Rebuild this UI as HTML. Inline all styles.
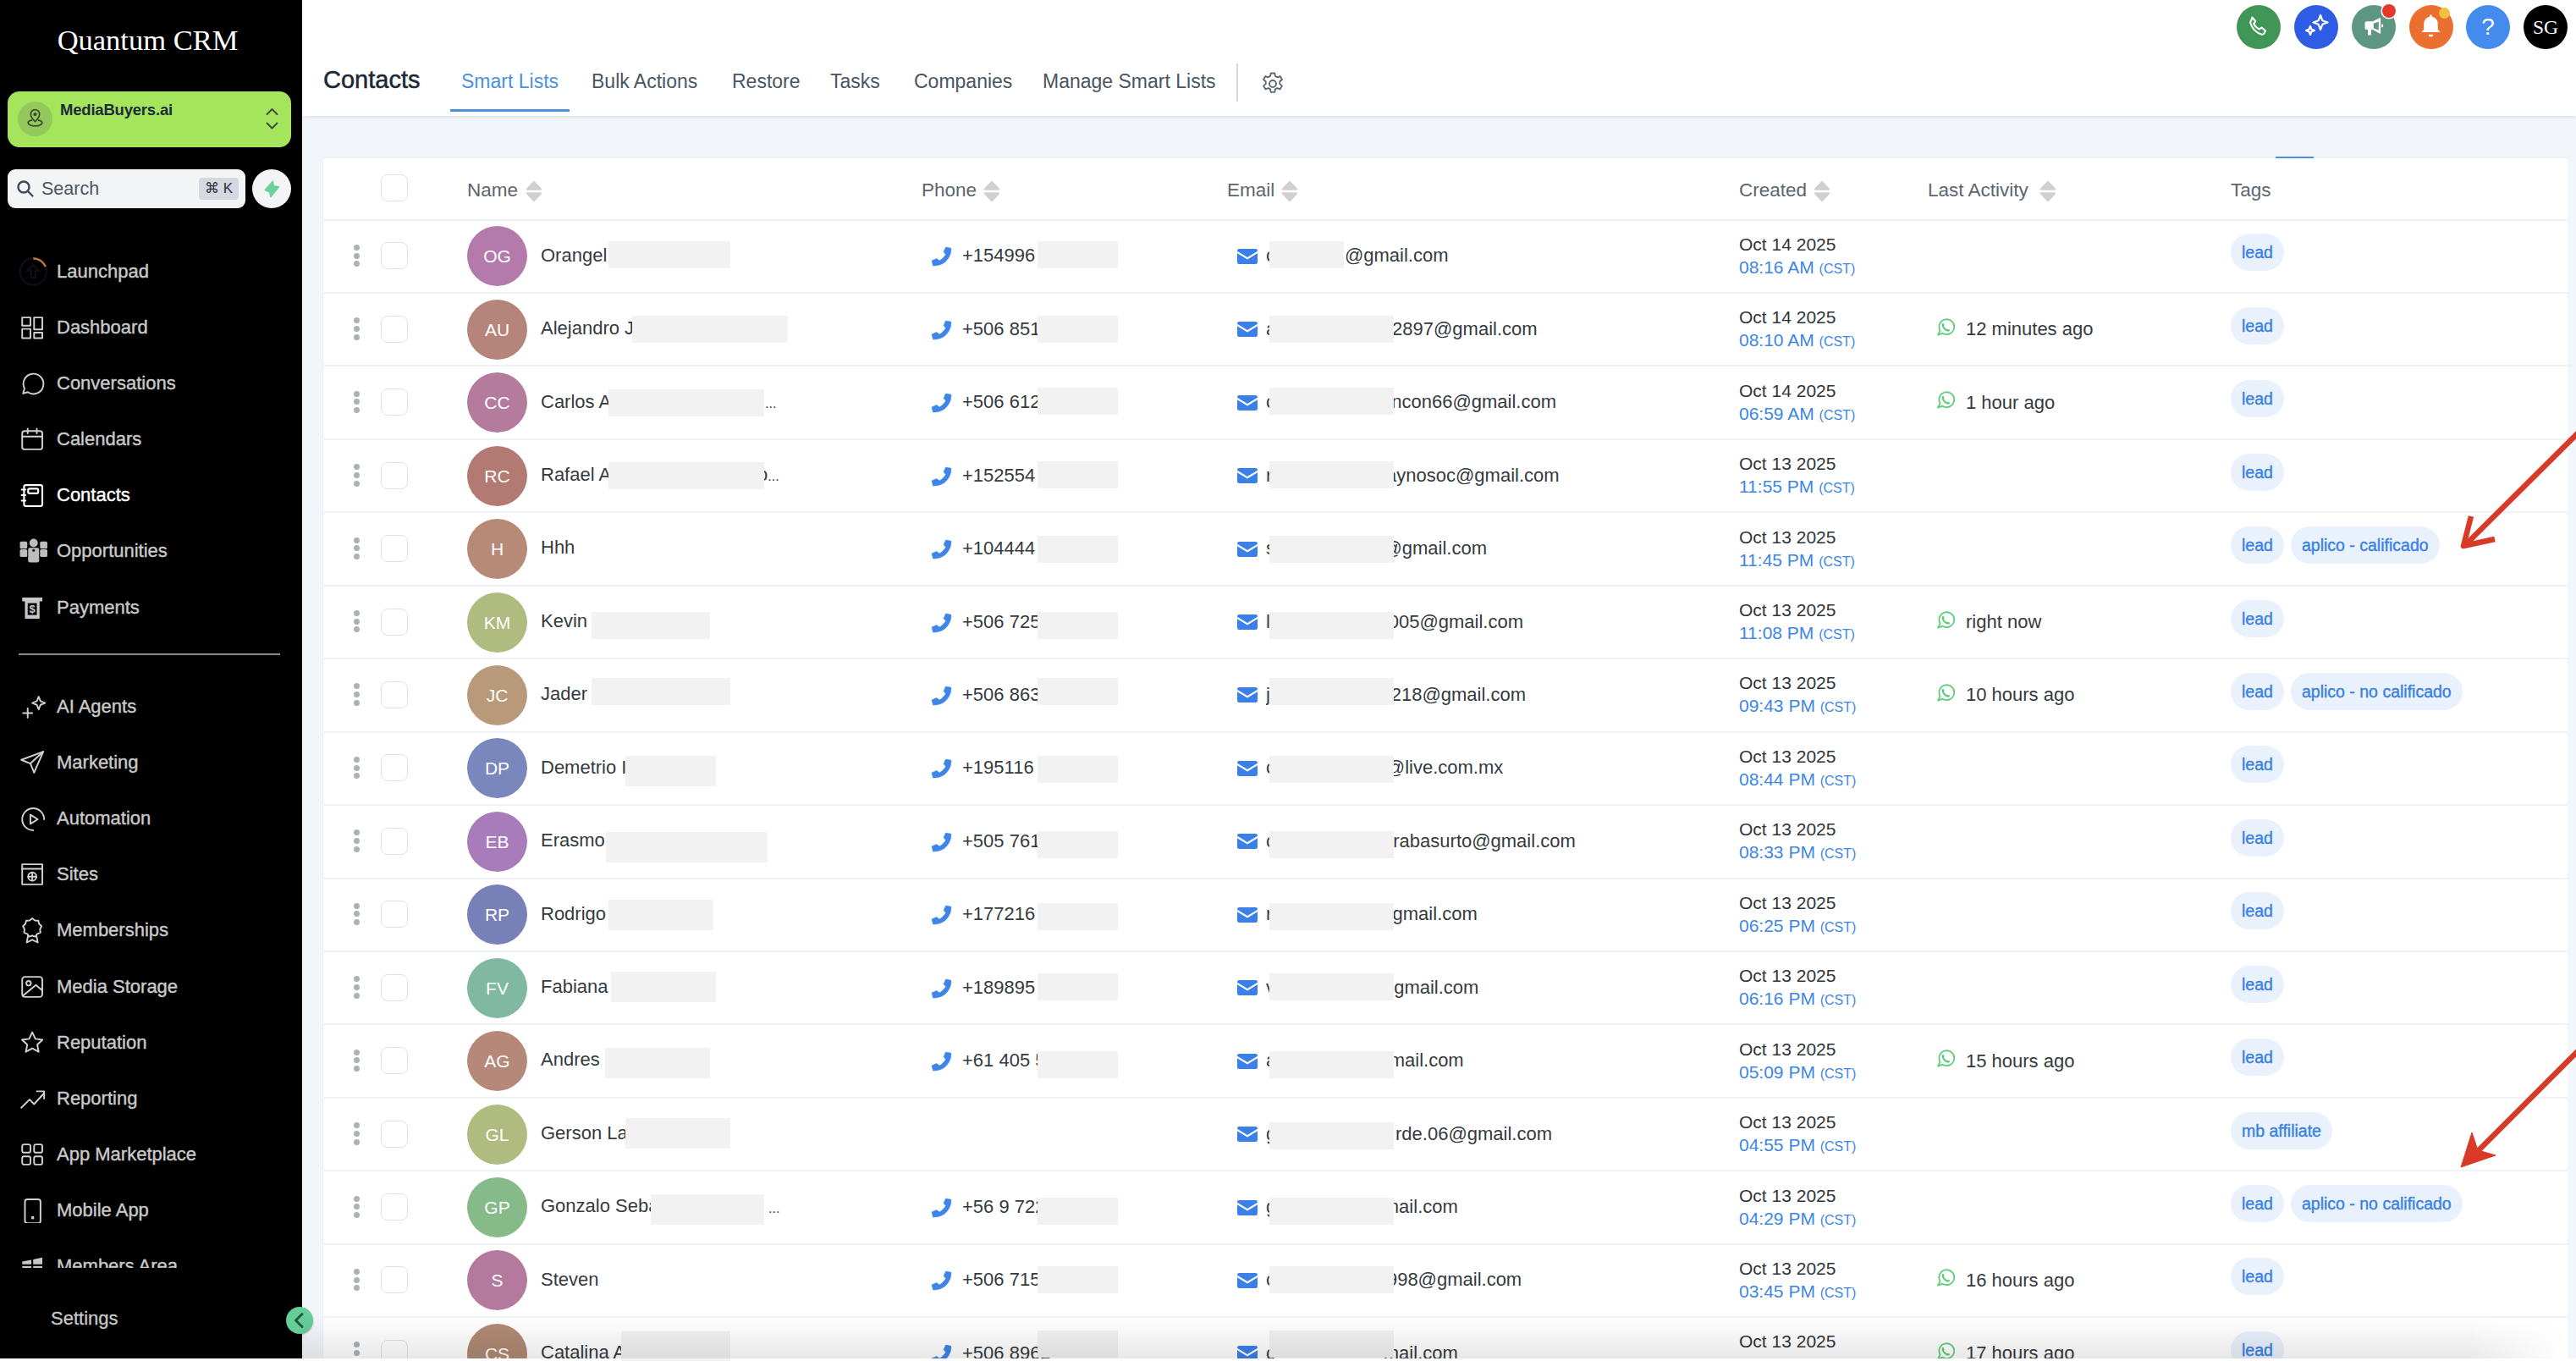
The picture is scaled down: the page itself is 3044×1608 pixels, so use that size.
<!DOCTYPE html>
<html><head><meta charset="utf-8"><style>
*{margin:0;padding:0;box-sizing:border-box}
html,body{width:3044px;height:1608px;overflow:hidden;background:#f2f5f9;font-family:"Liberation Sans",sans-serif;position:relative}
.a{position:absolute;white-space:nowrap}
#sb{position:absolute;left:0;top:0;width:357px;height:1605px;background:#000;overflow:hidden}
#hdr{position:absolute;left:357px;top:0;width:2687px;height:137px;background:#fff;box-shadow:0 2px 4px rgba(0,0,0,0.08)}
.nav{position:absolute;left:0;width:357px;height:40px;color:#c9c9c9;font-size:22px;line-height:40px;-webkit-text-stroke:0.4px currentColor}
.nav span{position:absolute;left:67px;top:0}
.nav svg{position:absolute;left:23px;top:6px;transform:scale(1.08);transform-origin:0 50%}
.tab{position:absolute;top:81px;font-size:23px;color:#4a5563;line-height:30px}
#card{position:absolute;left:381px;top:185px;width:2653px;height:1420px;background:#fff;border-top:2px solid #e8f2fc;border-left:1px solid #e8f0f8}
.th{position:absolute;top:210px;font-size:22.5px;line-height:30px;color:#5b6670}
.rl{position:absolute;left:381px;width:2653px;height:2px;background:#eff3f8}
.txt{font-size:22px;color:#353a3f;line-height:30px}
.red{position:absolute;background:#f2f2f2;z-index:2}
.dot{position:absolute;width:7px;height:7px;border-radius:50%;background:#abb1b5}
.cb{position:absolute;width:32px;height:32px;border:1.6px solid #dfe2e8;border-radius:8px;background:#fff}
.av{position:absolute;width:71px;height:71px;border-radius:50%;color:#fff;font-size:21px;text-align:center;line-height:71px}
.dt{font-size:21px;color:#30353a;line-height:26px}
.tm{font-size:21px;color:#3d86e6;line-height:26px}
.tm small{font-size:16px}
.tag{position:absolute;height:44px;border-radius:22px;background:#e9f1fc;color:#3b82e0;font-size:19.5px;line-height:44px;padding:0 13px;-webkit-text-stroke:0.4px #3b82e0}
.circ{position:absolute;top:5.5px;width:52px;height:52px;border-radius:50%}
</style></head><body>
<div id="sb">
<div class="a" style="left:0;width:349px;top:27px;text-align:center;font-family:'Liberation Serif',serif;font-size:34.5px;color:#fff;line-height:40px">Quantum CRM</div>
<div class="a" style="left:9px;top:108px;width:335px;height:66px;background:#a4e55c;border-radius:14px"></div>
<div class="a" style="left:21px;top:120px;width:41px;height:41px;border-radius:50%;background:#92c95a"></div>
<svg class="a" style="left:29px;top:128px" width="25" height="25" viewBox="0 0 24 24" fill="none" stroke="#3a4a30" stroke-width="1.7" stroke-linecap="round" stroke-linejoin="round"><path d="M12 15s5-4.5 5-8.5A5 5 0 0 0 7 6.5C7 10.5 12 15 12 15z"/><circle cx="12" cy="6.8" r="1.2" fill="#3a4a30"/><path d="M8 13.5c-2.5.5-4 1.5-4 2.8C4 18.3 7.6 20 12 20s8-1.7 8-3.7c0-1.3-1.5-2.3-4-2.8"/></svg>
<div class="a" style="left:71px;top:118px;font-size:18.5px;font-weight:bold;color:#1d2b3a;line-height:24px;letter-spacing:-0.2px">MediaBuyers.ai</div>
<svg class="a" style="left:313px;top:126px" width="16" height="28" viewBox="0 0 16 28" fill="none" stroke="#3b4a3c" stroke-width="1.9" stroke-linecap="round" stroke-linejoin="round"><path d="M2.5 9L8.5 3 14.5 9"/><path d="M2.5 19.5L8.5 25.5 14.5 19.5"/></svg>
<div class="a" style="left:9px;top:200px;width:281px;height:46px;background:#f3f4f6;border-radius:9px"></div>
<svg class="a" style="left:18px;top:211px" width="24" height="24" viewBox="0 0 24 24" fill="none" stroke="#3e4a59" stroke-width="2.4" stroke-linecap="round"><circle cx="10" cy="10" r="6.5"/><path d="M15 15l5.5 5.5"/></svg>
<div class="a" style="left:49px;top:208px;font-size:21.5px;color:#4b5563;line-height:30px">Search</div>
<div class="a" style="left:235px;top:210px;width:47px;height:26px;background:#d5d8de;border-radius:4px;font-size:17px;color:#2d3340;line-height:26px;text-align:center">&#8984; K</div>
<div class="a" style="left:298px;top:200px;width:46px;height:46px;border-radius:50%;background:#f3f4f6"></div>
<svg class="a" style="left:310px;top:211px" width="24" height="24" viewBox="0 0 24 24"><path d="M12.3 3.2L3.3 13.5L8.6 15.7L9.9 21.4L19.5 9.8L13.2 8.7Z" fill="#6cd09b" stroke="#6cd09b" stroke-width="1.6" stroke-linejoin="round"/></svg>
<div style="position:absolute;left:0;top:0;width:357px;height:1498px;overflow:hidden">
<div class="nav" style="top:300.6px;color:#c9c9c9"><svg style="top:4px;left:22px" width="32" height="32" viewBox="0 0 32 32"><circle cx="16" cy="16" r="14.5" fill="none" stroke="#0a0d13" stroke-width="2.5"/><path d="M16 1.5A14.5 14.5 0 0 1 29.4 10.5" fill="none" stroke="#b8733c" stroke-width="2.5"/><path d="M16 8.5l-6.5 6.5h4.200v7.500h4.600v-7.500h4.200z" fill="none" stroke="#0d1118" stroke-width="2"/></svg><span>Launchpad</span></div>
<div class="nav" style="top:366.75px;color:#c9c9c9"><svg width="28" height="28" viewBox="0 0 28 28" fill="none" stroke="#d0d0d0" stroke-width="1.8" stroke-linecap="round" stroke-linejoin="round"><rect x="3" y="3" width="9" height="9"/><rect x="16" y="3" width="9" height="13"/><rect x="3" y="15.5" width="9" height="10"/><rect x="16" y="19.5" width="9" height="6"/></svg><span>Dashboard</span></div>
<div class="nav" style="top:432.9px;color:#c9c9c9"><svg width="28" height="28" viewBox="0 0 28 28" fill="none" stroke="#d0d0d0" stroke-width="1.8" stroke-linecap="round" stroke-linejoin="round"><path d="M4 25l1.5-5.5A11 11 0 1 1 9 23.5z"/></svg><span>Conversations</span></div>
<div class="nav" style="top:499.05px;color:#c9c9c9"><svg width="28" height="28" viewBox="0 0 28 28" fill="none" stroke="#d0d0d0" stroke-width="1.8" stroke-linecap="round" stroke-linejoin="round"><rect x="3" y="5" width="22" height="20" rx="2.5"/><path d="M3 11h22M9 2.5v5M19 2.5v5"/></svg><span>Calendars</span></div>
<div class="nav" style="top:565.2px;color:#ffffff"><svg width="28" height="28" viewBox="0 0 28 28" fill="none" stroke="#ffffff" stroke-width="2" stroke-linecap="round" stroke-linejoin="round"><rect x="5" y="3" width="20" height="23" rx="2"/><rect x="9.5" y="7" width="11" height="5" rx="1.5"/><path d="M2.5 8h4M2.5 14h4M2.5 20h4"/></svg><span>Contacts</span></div>
<div class="nav" style="top:631.35px;color:#c9c9c9"><svg width="31" height="27" viewBox="0 0 31 27" fill="#bdbdbd"><rect x="0.5" y="3.5" width="8" height="8" rx="1.5"/><rect x="22.5" y="3.5" width="8" height="8" rx="1.5"/><rect x="0.5" y="12" width="8" height="8.5" rx="1.5"/><rect x="22.5" y="12" width="8" height="8.5" rx="1.5"/><circle cx="15.5" cy="5.2" r="4.6"/><path d="M11 10.5h9a1.5 1.5 0 0 1 1.5 1.5v12.5a2 2 0 0 1-2 2h-8a2 2 0 0 1-2-2V12a1.5 1.5 0 0 1 1.5-1.5z"/><circle cx="15.5" cy="13.2" r="1.4" fill="#000"/></svg><span>Opportunities</span></div>
<div class="nav" style="top:697.5px;color:#c9c9c9"><svg width="28" height="28" viewBox="0 0 28 28"><path d="M3 3h22v4h-3v19H6V7H3z" fill="#c8c8c8"/><rect x="9" y="9" width="10" height="13" fill="#000"/><text x="14" y="20" font-size="12" font-family="Liberation Sans" font-weight="bold" text-anchor="middle" fill="#c8c8c8">$</text></svg><span>Payments</span></div>
<div class="a" style="left:22px;top:772px;width:309px;height:2px;background:#8a8a8a"></div>
<div class="nav" style="top:815px"><svg width="30" height="30" viewBox="0 0 30 30" fill="none" stroke="#d0d0d0" stroke-width="1.8" stroke-linecap="round" stroke-linejoin="round"><path d="M21 3l2 5 5 2-5 2-2 5-2-5-5-2 5-2z"/><path d="M9 16v10M4 21h10"/></svg><span>AI Agents</span></div>
<div class="nav" style="top:881.1px"><svg width="28" height="28" viewBox="0 0 28 28" fill="none" stroke="#d0d0d0" stroke-width="1.8" stroke-linecap="round" stroke-linejoin="round"><path d="M26 2L2 11l10 4 4 10z"/><path d="M26 2L12 15"/></svg><span>Marketing</span></div>
<div class="nav" style="top:947.2px"><svg width="30" height="30" viewBox="0 0 30 30" fill="none" stroke="#d0d0d0" stroke-width="1.8" stroke-linecap="round" stroke-linejoin="round"><path d="M15 27A12 12 0 1 1 27 15"/><path d="M12 10v10l8-5z"/></svg><span>Automation</span></div>
<div class="nav" style="top:1013.3px"><svg width="28" height="28" viewBox="0 0 28 28" fill="none" stroke="#d0d0d0" stroke-width="1.8" stroke-linecap="round" stroke-linejoin="round"><rect x="3" y="3" width="22" height="22"/><path d="M3 8h22"/><circle cx="14" cy="16.5" r="4.5"/><path d="M9.5 16.5h9M14 12v9"/></svg><span>Sites</span></div>
<div class="nav" style="top:1079.4px"><svg width="28" height="30" viewBox="0 0 28 30" fill="none" stroke="#d0d0d0" stroke-width="1.8" stroke-linecap="round" stroke-linejoin="round"><path d="M14.00 1.20L16.94 3.42L20.62 3.61L21.45 7.20L24.14 9.71L22.47 12.99L22.92 16.65L19.53 18.09L17.52 21.18L14.00 20.10L10.48 21.18L8.47 18.09L5.08 16.65L5.53 12.99L3.86 9.71L6.55 7.20L7.38 3.61L11.06 3.42Z"/><path d="M9.5 19.5L8 27.5l6-3 6 3-1.5-8"/></svg><span>Memberships</span></div>
<div class="nav" style="top:1145.5px"><svg width="28" height="28" viewBox="0 0 28 28" fill="none" stroke="#d0d0d0" stroke-width="1.8" stroke-linecap="round" stroke-linejoin="round"><rect x="3" y="3" width="22" height="22" rx="3"/><circle cx="10" cy="10" r="2.5"/><path d="M3.5 24L18 12l7 6"/></svg><span>Media Storage</span></div>
<div class="nav" style="top:1211.6px"><svg width="28" height="28" viewBox="0 0 28 28" fill="none" stroke="#d0d0d0" stroke-width="1.8" stroke-linecap="round" stroke-linejoin="round"><path d="M14 2.5l3.4 7.2 7.8 1-5.7 5.4 1.5 7.8L14 20.1l-7 3.8 1.5-7.8-5.7-5.4 7.8-1z"/></svg><span>Reputation</span></div>
<div class="nav" style="top:1277.7px"><svg width="30" height="28" viewBox="0 0 30 28" fill="none" stroke="#d0d0d0" stroke-width="1.8" stroke-linecap="round" stroke-linejoin="round"><path d="M2 24l9-9 5 5 11-12"/><path d="M19 6h8v8"/></svg><span>Reporting</span></div>
<div class="nav" style="top:1343.8px"><svg width="28" height="28" viewBox="0 0 28 28" fill="none" stroke="#d0d0d0" stroke-width="1.8" stroke-linecap="round" stroke-linejoin="round"><rect x="3" y="3" width="9" height="9" rx="2"/><rect x="16" y="3" width="9" height="9" rx="2"/><rect x="3" y="16" width="9" height="9" rx="2"/><rect x="16" y="16" width="9" height="9" rx="2"/></svg><span>App Marketplace</span></div>
<div class="nav" style="top:1409.9px"><svg width="28" height="28" viewBox="0 0 28 28" fill="none" stroke="#d0d0d0" stroke-width="1.8" stroke-linecap="round" stroke-linejoin="round"><rect x="6" y="2" width="17" height="26" rx="2.5"/><circle cx="14.5" cy="22" r="0.8" fill="#d0d0d0"/></svg><span>Mobile App</span></div>
<div class="nav" style="top:1476px"><svg width="28" height="28" viewBox="0 0 28 28" fill="#c8c8c8"><path d="M3 9l10-2v5H3zM15 6.5l10-2V12H15zM3 14h10v2H3zM15 14h10v2H15z"/></svg><span>Members Area</span></div>
</div>
<div class="a" style="left:60px;top:1542.5px;font-size:22px;color:#c9c9c9;line-height:30px;-webkit-text-stroke:0.3px #c9c9c9">Settings</div>
</div>
<div class="a" style="left:338px;top:1544px;width:32px;height:32px;border-radius:50%;background:#66cc98;box-shadow:0 1px 2px rgba(0,0,0,.3)"></div>
<svg class="a" style="left:345px;top:1550px" width="18" height="20" viewBox="0 0 18 20" fill="none" stroke="#1d5b3c" stroke-width="3" stroke-linecap="round" stroke-linejoin="round"><path d="M12 2.5L4.500 10l7.500 7.500"/></svg>
<div id="hdr"></div>
<div class="a" style="left:382px;top:78px;font-size:29px;color:#1e2733;line-height:32px;-webkit-text-stroke:0.5px #1e2733">Contacts</div>
<div class="a tab" style="left:545px;color:#4a92dc">Smart Lists</div>
<div class="a tab" style="left:699px">Bulk Actions</div>
<div class="a tab" style="left:865px">Restore</div>
<div class="a tab" style="left:981px">Tasks</div>
<div class="a tab" style="left:1080px">Companies</div>
<div class="a tab" style="left:1232px">Manage Smart Lists</div>
<div class="a" style="left:532px;top:129px;width:141px;height:3px;background:#4a92dc"></div>
<div class="a" style="left:1461px;top:75px;width:2px;height:45px;background:#d5d8dc"></div>
<svg class="a" style="left:1488px;top:83px" width="32" height="32" viewBox="0 0 24 24" fill="none" stroke="#5e6670" stroke-width="1.4" stroke-linejoin="round"><path d="M10.3 2.6h3.4l.5 2.6 1.8 1 2.5-.9 1.7 2.9-2 1.7v2.2l2 1.7-1.7 2.9-2.5-.9-1.8 1-.5 2.6h-3.4l-.5-2.6-1.8-1-2.5.9-1.7-2.9 2-1.7V9.9l-2-1.7 1.7-2.9 2.5.9 1.8-1z"/><circle cx="12" cy="12" r="3"/></svg>
<div class="circ" style="left:2643px;background:#3f9656"></div>
<div class="circ" style="left:2711px;background:#2e5ce4"></div>
<div class="circ" style="left:2779px;background:#5d9681"></div>
<div class="circ" style="left:2847px;background:#eb7030"></div>
<div class="circ" style="left:2914px;background:#438bec"></div>
<div class="circ" style="left:2982px;background:#000"></div>
<svg class="a" style="left:2653px;top:16px" width="31" height="31" viewBox="0 0 24 24" fill="none" stroke="#fff" stroke-width="1.6" stroke-linejoin="round"><path d="M6.5 3.5l3 3.5-1.6 2.2c1 2.3 2.8 4.1 5 5.2l2.2-1.6 3.5 3-1.4 2.6c-.4.6-1.1.9-1.8.7C10.3 17.6 6.300 13.600 4.800 8.500c-.2-.7.1-1.4.7-1.8z"/></svg>
<svg class="a" style="left:2721px;top:15px" width="32" height="32" viewBox="0 0 32 32" fill="none" stroke="#fff" stroke-width="2.2" stroke-linejoin="round"><path d="M21 3l2.3 6.2 6.2 2.3-6.2 2.3L21 20l-2.3-6.2-6.2-2.3 6.2-2.3z"/><path d="M9 16l1.4 3.6 3.6 1.4-3.6 1.4L9 26l-1.4-3.6L4 21l3.6-1.4z"/></svg>
<svg class="a" style="left:2791px;top:17px" width="28" height="28" viewBox="0 0 24 24" fill="#fff"><path d="M19 3.5v16l-1.2-.2L11 15.500H9.5V21h-3.500v-5.5H5a2 2 0 0 1-2-2V9a2 2 0 0 1 2-2h6l6.8-3.3zM17 7.200L11.800 9.300v4.600L17 16z" fill-rule="evenodd"/><path d="M20 10h1.500v3H20z"/></svg>
<div class="a" style="left:2815px;top:5px;width:16px;height:16px;border-radius:50%;background:#e5372b;box-shadow:0 0 0 1.5px #fff"></div>
<svg class="a" style="left:2856px;top:14px" width="33" height="33" viewBox="0 0 24 24" fill="#fff"><path d="M12 2.5c.6 0 1 .4 1 1v.6A6 6 0 0 1 18 10v5l2 2.500H4L6 15v-5a6 6 0 0 1 5-5.9v-.6c0-.6.4-1 1-1z"/><path d="M10 19.500h4a2 2 0 0 1-4 0z"/></svg>
<div class="a" style="left:2882px;top:9px;width:13px;height:13px;border-radius:50%;background:#f4c042"></div>
<div class="a" style="left:2914px;top:12px;width:52px;height:40px;text-align:center;color:#fff;font-size:28px;line-height:40px">?</div>
<div class="a" style="left:2982px;top:12px;width:52px;height:40px;text-align:center;color:#fff;font-family:'Liberation Serif',serif;font-size:23.5px;line-height:40px">SG</div>
<div id="card"></div>
<div class="a" style="left:2689px;top:185px;width:45px;height:2px;background:#4a8de8"></div>
<div class="cb" style="left:450px;top:206px"></div>
<div class="a th" style="left:552px">Name</div>
<div class="a" style="left:621px;top:213px"><svg width="20" height="26" viewBox="0 0 20 26"><path d="M10 2L18 10.5H2z" fill="#d0d0d0" stroke="#d0d0d0" stroke-width="2.4" stroke-linejoin="round"/><path d="M10 24L18 15.5H2z" fill="#d0d0d0" stroke="#d0d0d0" stroke-width="2.4" stroke-linejoin="round"/></svg></div>
<div class="a th" style="left:1089px">Phone</div>
<div class="a" style="left:1162px;top:213px"><svg width="20" height="26" viewBox="0 0 20 26"><path d="M10 2L18 10.5H2z" fill="#d0d0d0" stroke="#d0d0d0" stroke-width="2.4" stroke-linejoin="round"/><path d="M10 24L18 15.5H2z" fill="#d0d0d0" stroke="#d0d0d0" stroke-width="2.4" stroke-linejoin="round"/></svg></div>
<div class="a th" style="left:1450px">Email</div>
<div class="a" style="left:1514px;top:213px"><svg width="20" height="26" viewBox="0 0 20 26"><path d="M10 2L18 10.5H2z" fill="#d0d0d0" stroke="#d0d0d0" stroke-width="2.4" stroke-linejoin="round"/><path d="M10 24L18 15.5H2z" fill="#d0d0d0" stroke="#d0d0d0" stroke-width="2.4" stroke-linejoin="round"/></svg></div>
<div class="a th" style="left:2055px">Created</div>
<div class="a" style="left:2143px;top:213px"><svg width="20" height="26" viewBox="0 0 20 26"><path d="M10 2L18 10.5H2z" fill="#d0d0d0" stroke="#d0d0d0" stroke-width="2.4" stroke-linejoin="round"/><path d="M10 24L18 15.5H2z" fill="#d0d0d0" stroke="#d0d0d0" stroke-width="2.4" stroke-linejoin="round"/></svg></div>
<div class="a th" style="left:2278px">Last Activity</div>
<div class="a" style="left:2410px;top:213px"><svg width="20" height="26" viewBox="0 0 20 26"><path d="M10 2L18 10.5H2z" fill="#d0d0d0" stroke="#d0d0d0" stroke-width="2.4" stroke-linejoin="round"/><path d="M10 24L18 15.5H2z" fill="#d0d0d0" stroke="#d0d0d0" stroke-width="2.4" stroke-linejoin="round"/></svg></div>
<div class="a th" style="left:2636px">Tags</div>
<div class="rl" style="top:258.6px"></div>
<div class="rl" style="top:345.04px"></div>
<div class="rl" style="top:431.48px"></div>
<div class="rl" style="top:517.92px"></div>
<div class="rl" style="top:604.36px"></div>
<div class="rl" style="top:690.8px"></div>
<div class="rl" style="top:777.24px"></div>
<div class="rl" style="top:863.68px"></div>
<div class="rl" style="top:950.12px"></div>
<div class="rl" style="top:1036.56px"></div>
<div class="rl" style="top:1123px"></div>
<div class="rl" style="top:1209.44px"></div>
<div class="rl" style="top:1295.88px"></div>
<div class="rl" style="top:1382.32px"></div>
<div class="rl" style="top:1468.76px"></div>
<div class="rl" style="top:1555.2px"></div>
<div class="rl" style="top:1641.64px"></div>
<div class="dot" style="left:418px;top:288.82px"></div>
<div class="dot" style="left:418px;top:298.52px"></div>
<div class="dot" style="left:418px;top:308.22px"></div>
<div class="cb" style="left:450px;top:286.32px"></div>
<div class="av" style="left:552px;top:267.32px;background:#b47aab">OG</div>
<div class="a txt" style="left:639px;top:286.62px">Orangel</div>
<div class="red" style="left:719px;top:284.82px;width:144px;height:32px"></div>
<div class="a" style="left:1100px;top:291.32px"><svg width="25" height="24" viewBox="0 0 25 24"><path d="M17.6 1.1L23.9 2.3C24.2 8.5 21.3 14.8 16.3 18.9C12.4 21.8 7.6 23.1 2.6 23L1.1 16.9L6.8 14.5L10.2 17.1C13.1 15.5 15.9 12.7 17.6 9.6L15.1 6.6Z" fill="#3d85e8" stroke="#3d85e8" stroke-width="0.6" stroke-linejoin="round"/></svg></div>
<div class="a txt" style="left:1137px;top:287.32px">+154996</div>
<div class="red" style="left:1226px;top:285.02px;width:95px;height:32px"></div>
<div class="a" style="left:1462px;top:293.82px"><svg width="24" height="18" viewBox="0 0 24 18"><path d="M0 2.2A2.200 2.200 0 0 1 2.200 0h19.600A2.200 2.200 0 0 1 24 2.200v.6L12 10 0 2.800z" fill="#3b80e8"/><path d="M0 5.200l12 7.300 12-7.300v10.600A2.200 2.200 0 0 1 21.800 18H2.200A2.200 2.200 0 0 1 0 15.800z" fill="#3b80e8"/></svg></div>
<div class="a txt" style="left:1496px;top:287.32px;width:40px;overflow:hidden">c</div>
<div class="a txt" style="right:1332.5px;top:287.32px">@gmail.com</div>
<div class="red" style="left:1500px;top:285.02px;width:88px;height:32px"></div>
<div class="a dt" style="left:2055px;top:275.82px">Oct 14 2025</div>
<div class="a tm" style="left:2055px;top:302.82px">08:16 AM <small>(CST)</small></div>
<div class="tag" style="left:2636px;top:276.32px">lead</div>
<div class="dot" style="left:418px;top:375.26px"></div>
<div class="dot" style="left:418px;top:384.96px"></div>
<div class="dot" style="left:418px;top:394.66px"></div>
<div class="cb" style="left:450px;top:372.76px"></div>
<div class="av" style="left:552px;top:353.76px;background:#b5847a">AU</div>
<div class="a txt" style="left:639px;top:373.06px">Alejandro J</div>
<div class="red" style="left:747px;top:373.26px;width:184px;height:32px"></div>
<div class="a" style="left:1100px;top:377.76px"><svg width="25" height="24" viewBox="0 0 25 24"><path d="M17.6 1.1L23.9 2.3C24.2 8.5 21.3 14.8 16.3 18.9C12.4 21.8 7.6 23.1 2.6 23L1.1 16.9L6.8 14.5L10.2 17.1C13.1 15.5 15.9 12.7 17.6 9.6L15.1 6.6Z" fill="#3d85e8" stroke="#3d85e8" stroke-width="0.6" stroke-linejoin="round"/></svg></div>
<div class="a txt" style="left:1137px;top:373.76px">+506 8512</div>
<div class="red" style="left:1226px;top:372.86px;width:95px;height:32px"></div>
<div class="a" style="left:1462px;top:380.26px"><svg width="24" height="18" viewBox="0 0 24 18"><path d="M0 2.2A2.200 2.200 0 0 1 2.200 0h19.600A2.200 2.200 0 0 1 24 2.200v.6L12 10 0 2.800z" fill="#3b80e8"/><path d="M0 5.200l12 7.300 12-7.300v10.600A2.200 2.200 0 0 1 21.800 18H2.200A2.200 2.200 0 0 1 0 15.800z" fill="#3b80e8"/></svg></div>
<div class="a txt" style="left:1496px;top:373.76px;width:40px;overflow:hidden">a</div>
<div class="a txt" style="right:1227.4px;top:373.76px">22897@gmail.com</div>
<div class="red" style="left:1500px;top:372.86px;width:147px;height:32px"></div>
<div class="a dt" style="left:2055px;top:362.26px">Oct 14 2025</div>
<div class="a tm" style="left:2055px;top:389.26px">08:10 AM <small>(CST)</small></div>
<div class="a" style="left:2289px;top:375.76px"><svg width="21" height="21" viewBox="0 0 21 21"><path d="M3.6 14.6A8.9 8.9 0 1 1 6.6 17.7L1 19.6Z" fill="none" stroke="#5dcf7a" stroke-width="1.8" stroke-linejoin="round"/><path d="M6.2 6.2C6.6 5.5 7.5 5.6 7.8 6.3L8.5 8.3C8.6 8.8 8.3 9.2 8 9.5C8.9 11.1 10.1 12.3 11.7 13.1C12 12.8 12.5 12.5 13 12.7L14.7 13.5C15.3 13.9 15.2 14.7 14.6 15.1C13.6 15.800 12.2 15.800 11 15.2C8.800 14.100 7 12.300 6 10.100C5.500 8.900 5.600 7.200 6.200 6.200Z" fill="#5dcf7a"/></svg></div>
<div class="a txt" style="left:2323px;top:374.26px">12 minutes ago</div>
<div class="tag" style="left:2636px;top:362.76px">lead</div>
<div class="dot" style="left:418px;top:461.7px"></div>
<div class="dot" style="left:418px;top:471.4px"></div>
<div class="dot" style="left:418px;top:481.1px"></div>
<div class="cb" style="left:450px;top:459.2px"></div>
<div class="av" style="left:552px;top:440.2px;background:#b47b9c">CC</div>
<div class="a txt" style="left:639px;top:459.5px">Carlos A</div>
<div class="red" style="left:719px;top:459.7px;width:184px;height:32px"></div>
<div class="a txt" style="left:904px;top:459.7px"><span style="font-size:16px">...</span></div>
<div class="a" style="left:1100px;top:464.2px"><svg width="25" height="24" viewBox="0 0 25 24"><path d="M17.6 1.1L23.9 2.3C24.2 8.5 21.3 14.8 16.3 18.9C12.4 21.8 7.6 23.1 2.6 23L1.1 16.9L6.8 14.5L10.2 17.1C13.1 15.5 15.9 12.7 17.6 9.6L15.1 6.6Z" fill="#3d85e8" stroke="#3d85e8" stroke-width="0.6" stroke-linejoin="round"/></svg></div>
<div class="a txt" style="left:1137px;top:460.2px">+506 6123</div>
<div class="red" style="left:1226px;top:458.1px;width:95px;height:32px"></div>
<div class="a" style="left:1462px;top:466.7px"><svg width="24" height="18" viewBox="0 0 24 18"><path d="M0 2.2A2.200 2.200 0 0 1 2.200 0h19.600A2.200 2.200 0 0 1 24 2.200v.6L12 10 0 2.800z" fill="#3b80e8"/><path d="M0 5.200l12 7.300 12-7.300v10.600A2.200 2.200 0 0 1 21.800 18H2.200A2.200 2.200 0 0 1 0 15.800z" fill="#3b80e8"/></svg></div>
<div class="a txt" style="left:1496px;top:460.2px;width:40px;overflow:hidden">c</div>
<div class="a txt" style="right:1205px;top:460.2px">ncon66@gmail.com</div>
<div class="red" style="left:1500px;top:458.1px;width:147px;height:32px"></div>
<div class="a dt" style="left:2055px;top:448.7px">Oct 14 2025</div>
<div class="a tm" style="left:2055px;top:475.7px">06:59 AM <small>(CST)</small></div>
<div class="a" style="left:2289px;top:462.2px"><svg width="21" height="21" viewBox="0 0 21 21"><path d="M3.6 14.6A8.9 8.9 0 1 1 6.6 17.7L1 19.6Z" fill="none" stroke="#5dcf7a" stroke-width="1.8" stroke-linejoin="round"/><path d="M6.2 6.2C6.6 5.5 7.5 5.6 7.8 6.3L8.5 8.3C8.6 8.8 8.3 9.2 8 9.5C8.9 11.1 10.1 12.3 11.7 13.1C12 12.8 12.5 12.5 13 12.7L14.7 13.5C15.3 13.9 15.2 14.7 14.6 15.1C13.6 15.800 12.2 15.800 11 15.2C8.800 14.100 7 12.300 6 10.100C5.500 8.900 5.600 7.200 6.200 6.200Z" fill="#5dcf7a"/></svg></div>
<div class="a txt" style="left:2323px;top:460.7px">1 hour ago</div>
<div class="tag" style="left:2636px;top:449.2px">lead</div>
<div class="dot" style="left:418px;top:548.14px"></div>
<div class="dot" style="left:418px;top:557.84px"></div>
<div class="dot" style="left:418px;top:567.54px"></div>
<div class="cb" style="left:450px;top:545.64px"></div>
<div class="av" style="left:552px;top:526.64px;background:#b37a74">RC</div>
<div class="a txt" style="left:639px;top:545.94px">Rafael A</div>
<div class="red" style="left:719px;top:546.14px;width:184px;height:32px"></div>
<div class="a txt" style="left:895px;top:546.14px">o<span style="font-size:16px">...</span></div>
<div class="a" style="left:1100px;top:550.64px"><svg width="25" height="24" viewBox="0 0 25 24"><path d="M17.6 1.1L23.9 2.3C24.2 8.5 21.3 14.8 16.3 18.9C12.4 21.8 7.6 23.1 2.6 23L1.1 16.9L6.8 14.5L10.2 17.1C13.1 15.5 15.9 12.7 17.6 9.6L15.1 6.6Z" fill="#3d85e8" stroke="#3d85e8" stroke-width="0.6" stroke-linejoin="round"/></svg></div>
<div class="a txt" style="left:1137px;top:546.64px">+152554</div>
<div class="red" style="left:1226px;top:544.94px;width:95px;height:32px"></div>
<div class="a" style="left:1462px;top:553.14px"><svg width="24" height="18" viewBox="0 0 24 18"><path d="M0 2.2A2.200 2.200 0 0 1 2.200 0h19.600A2.200 2.200 0 0 1 24 2.200v.6L12 10 0 2.800z" fill="#3b80e8"/><path d="M0 5.200l12 7.300 12-7.300v10.600A2.200 2.200 0 0 1 21.800 18H2.200A2.200 2.200 0 0 1 0 15.800z" fill="#3b80e8"/></svg></div>
<div class="a txt" style="left:1496px;top:546.64px;width:40px;overflow:hidden">r</div>
<div class="a txt" style="right:1201.4px;top:546.64px">aynosoc@gmail.com</div>
<div class="red" style="left:1500px;top:544.94px;width:147px;height:32px"></div>
<div class="a dt" style="left:2055px;top:535.14px">Oct 13 2025</div>
<div class="a tm" style="left:2055px;top:562.14px">11:55 PM <small>(CST)</small></div>
<div class="tag" style="left:2636px;top:535.64px">lead</div>
<div class="dot" style="left:418px;top:634.58px"></div>
<div class="dot" style="left:418px;top:644.28px"></div>
<div class="dot" style="left:418px;top:653.98px"></div>
<div class="cb" style="left:450px;top:632.08px"></div>
<div class="av" style="left:552px;top:613.08px;background:#b78a78">H</div>
<div class="a txt" style="left:639px;top:632.38px">Hhh</div>
<div class="a" style="left:1100px;top:637.08px"><svg width="25" height="24" viewBox="0 0 25 24"><path d="M17.6 1.1L23.9 2.3C24.2 8.5 21.3 14.8 16.3 18.9C12.4 21.8 7.6 23.1 2.6 23L1.1 16.9L6.8 14.5L10.2 17.1C13.1 15.5 15.9 12.7 17.6 9.6L15.1 6.6Z" fill="#3d85e8" stroke="#3d85e8" stroke-width="0.6" stroke-linejoin="round"/></svg></div>
<div class="a txt" style="left:1137px;top:633.08px">+104444</div>
<div class="red" style="left:1226px;top:633.38px;width:95px;height:32px"></div>
<div class="a" style="left:1462px;top:639.58px"><svg width="24" height="18" viewBox="0 0 24 18"><path d="M0 2.2A2.200 2.200 0 0 1 2.200 0h19.600A2.200 2.200 0 0 1 24 2.200v.6L12 10 0 2.800z" fill="#3b80e8"/><path d="M0 5.200l12 7.300 12-7.300v10.600A2.200 2.200 0 0 1 21.800 18H2.200A2.200 2.200 0 0 1 0 15.800z" fill="#3b80e8"/></svg></div>
<div class="a txt" style="left:1496px;top:633.08px;width:40px;overflow:hidden">s</div>
<div class="a txt" style="right:1287px;top:633.08px">@gmail.com</div>
<div class="red" style="left:1500px;top:633.38px;width:147px;height:32px"></div>
<div class="a dt" style="left:2055px;top:621.58px">Oct 13 2025</div>
<div class="a tm" style="left:2055px;top:648.58px">11:45 PM <small>(CST)</small></div>
<div class="tag" style="left:2636px;top:622.08px">lead</div>
<div class="tag" style="left:2707px;top:622.08px">aplico - calificado</div>
<div class="dot" style="left:418px;top:721.02px"></div>
<div class="dot" style="left:418px;top:730.72px"></div>
<div class="dot" style="left:418px;top:740.42px"></div>
<div class="cb" style="left:450px;top:718.52px"></div>
<div class="av" style="left:552px;top:699.52px;background:#b0bb80">KM</div>
<div class="a txt" style="left:639px;top:718.82px">Kevin</div>
<div class="red" style="left:699px;top:723.02px;width:140px;height:32px"></div>
<div class="a" style="left:1100px;top:723.52px"><svg width="25" height="24" viewBox="0 0 25 24"><path d="M17.6 1.1L23.9 2.3C24.2 8.5 21.3 14.8 16.3 18.9C12.4 21.8 7.6 23.1 2.6 23L1.1 16.9L6.8 14.5L10.2 17.1C13.1 15.5 15.9 12.7 17.6 9.6L15.1 6.6Z" fill="#3d85e8" stroke="#3d85e8" stroke-width="0.6" stroke-linejoin="round"/></svg></div>
<div class="a txt" style="left:1137px;top:719.52px">+506 7253</div>
<div class="red" style="left:1226px;top:722.72px;width:95px;height:32px"></div>
<div class="a" style="left:1462px;top:726.02px"><svg width="24" height="18" viewBox="0 0 24 18"><path d="M0 2.2A2.200 2.200 0 0 1 2.200 0h19.600A2.200 2.200 0 0 1 24 2.200v.6L12 10 0 2.800z" fill="#3b80e8"/><path d="M0 5.200l12 7.300 12-7.300v10.600A2.200 2.200 0 0 1 21.800 18H2.200A2.200 2.200 0 0 1 0 15.800z" fill="#3b80e8"/></svg></div>
<div class="a txt" style="left:1496px;top:719.52px;width:40px;overflow:hidden">l</div>
<div class="a txt" style="right:1244px;top:719.52px">005@gmail.com</div>
<div class="red" style="left:1500px;top:722.72px;width:147px;height:32px"></div>
<div class="a dt" style="left:2055px;top:708.02px">Oct 13 2025</div>
<div class="a tm" style="left:2055px;top:735.02px">11:08 PM <small>(CST)</small></div>
<div class="a" style="left:2289px;top:721.52px"><svg width="21" height="21" viewBox="0 0 21 21"><path d="M3.6 14.6A8.9 8.9 0 1 1 6.6 17.7L1 19.6Z" fill="none" stroke="#5dcf7a" stroke-width="1.8" stroke-linejoin="round"/><path d="M6.2 6.2C6.6 5.5 7.5 5.6 7.8 6.3L8.5 8.3C8.6 8.8 8.3 9.2 8 9.5C8.9 11.1 10.1 12.3 11.7 13.1C12 12.8 12.5 12.5 13 12.7L14.7 13.5C15.3 13.9 15.2 14.7 14.6 15.1C13.6 15.800 12.2 15.800 11 15.2C8.800 14.100 7 12.300 6 10.100C5.500 8.900 5.600 7.200 6.200 6.200Z" fill="#5dcf7a"/></svg></div>
<div class="a txt" style="left:2323px;top:720.02px">right now</div>
<div class="tag" style="left:2636px;top:708.52px">lead</div>
<div class="dot" style="left:418px;top:807.46px"></div>
<div class="dot" style="left:418px;top:817.16px"></div>
<div class="dot" style="left:418px;top:826.86px"></div>
<div class="cb" style="left:450px;top:804.96px"></div>
<div class="av" style="left:552px;top:785.96px;background:#b89a7a">JC</div>
<div class="a txt" style="left:639px;top:805.26px">Jader</div>
<div class="red" style="left:699px;top:801.46px;width:164px;height:32px"></div>
<div class="a" style="left:1100px;top:809.96px"><svg width="25" height="24" viewBox="0 0 25 24"><path d="M17.6 1.1L23.9 2.3C24.2 8.5 21.3 14.8 16.3 18.9C12.4 21.8 7.6 23.1 2.6 23L1.1 16.9L6.8 14.5L10.2 17.1C13.1 15.5 15.9 12.7 17.6 9.6L15.1 6.6Z" fill="#3d85e8" stroke="#3d85e8" stroke-width="0.6" stroke-linejoin="round"/></svg></div>
<div class="a txt" style="left:1137px;top:805.96px">+506 8634</div>
<div class="red" style="left:1226px;top:800.96px;width:95px;height:32px"></div>
<div class="a" style="left:1462px;top:812.46px"><svg width="24" height="18" viewBox="0 0 24 18"><path d="M0 2.2A2.200 2.200 0 0 1 2.200 0h19.600A2.200 2.200 0 0 1 24 2.200v.6L12 10 0 2.800z" fill="#3b80e8"/><path d="M0 5.200l12 7.300 12-7.300v10.600A2.200 2.200 0 0 1 21.800 18H2.200A2.200 2.200 0 0 1 0 15.800z" fill="#3b80e8"/></svg></div>
<div class="a txt" style="left:1496px;top:805.96px;width:40px;overflow:hidden">j</div>
<div class="a txt" style="right:1241px;top:805.96px">2218@gmail.com</div>
<div class="red" style="left:1500px;top:800.96px;width:147px;height:32px"></div>
<div class="a dt" style="left:2055px;top:794.46px">Oct 13 2025</div>
<div class="a tm" style="left:2055px;top:821.46px">09:43 PM <small>(CST)</small></div>
<div class="a" style="left:2289px;top:807.96px"><svg width="21" height="21" viewBox="0 0 21 21"><path d="M3.6 14.6A8.9 8.9 0 1 1 6.6 17.7L1 19.6Z" fill="none" stroke="#5dcf7a" stroke-width="1.8" stroke-linejoin="round"/><path d="M6.2 6.2C6.6 5.5 7.5 5.6 7.8 6.3L8.5 8.3C8.6 8.8 8.3 9.2 8 9.5C8.9 11.1 10.1 12.3 11.7 13.1C12 12.8 12.5 12.5 13 12.7L14.7 13.5C15.3 13.9 15.2 14.7 14.6 15.1C13.6 15.800 12.2 15.800 11 15.2C8.800 14.100 7 12.300 6 10.100C5.500 8.900 5.600 7.200 6.200 6.200Z" fill="#5dcf7a"/></svg></div>
<div class="a txt" style="left:2323px;top:806.46px">10 hours ago</div>
<div class="tag" style="left:2636px;top:794.96px">lead</div>
<div class="tag" style="left:2707px;top:794.96px">aplico - no calificado</div>
<div class="dot" style="left:418px;top:893.9px"></div>
<div class="dot" style="left:418px;top:903.6px"></div>
<div class="dot" style="left:418px;top:913.3px"></div>
<div class="cb" style="left:450px;top:891.4px"></div>
<div class="av" style="left:552px;top:872.4px;background:#7a87bd">DP</div>
<div class="a txt" style="left:639px;top:891.7px">Demetrio I</div>
<div class="red" style="left:739px;top:892.7px;width:107px;height:36px"></div>
<div class="a" style="left:1100px;top:896.4px"><svg width="25" height="24" viewBox="0 0 25 24"><path d="M17.6 1.1L23.9 2.3C24.2 8.5 21.3 14.8 16.3 18.9C12.4 21.8 7.6 23.1 2.6 23L1.1 16.9L6.8 14.5L10.2 17.1C13.1 15.5 15.9 12.7 17.6 9.6L15.1 6.6Z" fill="#3d85e8" stroke="#3d85e8" stroke-width="0.6" stroke-linejoin="round"/></svg></div>
<div class="a txt" style="left:1137px;top:892.4px">+195116</div>
<div class="red" style="left:1226px;top:893.4px;width:95px;height:32px"></div>
<div class="a" style="left:1462px;top:898.9px"><svg width="24" height="18" viewBox="0 0 24 18"><path d="M0 2.2A2.200 2.200 0 0 1 2.200 0h19.600A2.200 2.200 0 0 1 24 2.200v.6L12 10 0 2.800z" fill="#3b80e8"/><path d="M0 5.200l12 7.300 12-7.300v10.600A2.200 2.200 0 0 1 21.800 18H2.200A2.200 2.200 0 0 1 0 15.800z" fill="#3b80e8"/></svg></div>
<div class="a txt" style="left:1496px;top:892.4px;width:40px;overflow:hidden">c</div>
<div class="a txt" style="right:1267.7px;top:892.4px">@live.com.mx</div>
<div class="red" style="left:1500px;top:893.4px;width:147px;height:32px"></div>
<div class="a dt" style="left:2055px;top:880.9px">Oct 13 2025</div>
<div class="a tm" style="left:2055px;top:907.9px">08:44 PM <small>(CST)</small></div>
<div class="tag" style="left:2636px;top:881.4px">lead</div>
<div class="dot" style="left:418px;top:980.34px"></div>
<div class="dot" style="left:418px;top:990.04px"></div>
<div class="dot" style="left:418px;top:999.74px"></div>
<div class="cb" style="left:450px;top:977.84px"></div>
<div class="av" style="left:552px;top:958.84px;background:#a87bbb">EB</div>
<div class="a txt" style="left:639px;top:978.14px">Erasmo</div>
<div class="red" style="left:716px;top:982.54px;width:191px;height:36px"></div>
<div class="a" style="left:1100px;top:982.84px"><svg width="25" height="24" viewBox="0 0 25 24"><path d="M17.6 1.1L23.9 2.3C24.2 8.5 21.3 14.8 16.3 18.9C12.4 21.8 7.6 23.1 2.6 23L1.1 16.9L6.8 14.5L10.2 17.1C13.1 15.5 15.9 12.7 17.6 9.6L15.1 6.6Z" fill="#3d85e8" stroke="#3d85e8" stroke-width="0.6" stroke-linejoin="round"/></svg></div>
<div class="a txt" style="left:1137px;top:978.84px">+505 7612</div>
<div class="red" style="left:1226px;top:981.64px;width:95px;height:32px"></div>
<div class="a" style="left:1462px;top:985.34px"><svg width="24" height="18" viewBox="0 0 24 18"><path d="M0 2.2A2.200 2.200 0 0 1 2.200 0h19.600A2.200 2.200 0 0 1 24 2.200v.6L12 10 0 2.800z" fill="#3b80e8"/><path d="M0 5.200l12 7.300 12-7.300v10.600A2.200 2.200 0 0 1 21.800 18H2.200A2.200 2.200 0 0 1 0 15.800z" fill="#3b80e8"/></svg></div>
<div class="a txt" style="left:1496px;top:978.84px;width:40px;overflow:hidden">c</div>
<div class="a txt" style="right:1182.2px;top:978.84px">rabasurto@gmail.com</div>
<div class="red" style="left:1500px;top:981.64px;width:147px;height:32px"></div>
<div class="a dt" style="left:2055px;top:967.34px">Oct 13 2025</div>
<div class="a tm" style="left:2055px;top:994.34px">08:33 PM <small>(CST)</small></div>
<div class="tag" style="left:2636px;top:967.84px">lead</div>
<div class="dot" style="left:418px;top:1066.78px"></div>
<div class="dot" style="left:418px;top:1076.48px"></div>
<div class="dot" style="left:418px;top:1086.18px"></div>
<div class="cb" style="left:450px;top:1064.28px"></div>
<div class="av" style="left:552px;top:1045.28px;background:#7880b8">RP</div>
<div class="a txt" style="left:639px;top:1064.58px">Rodrigo</div>
<div class="red" style="left:719px;top:1062.78px;width:124px;height:36px"></div>
<div class="a" style="left:1100px;top:1069.28px"><svg width="25" height="24" viewBox="0 0 25 24"><path d="M17.6 1.1L23.9 2.3C24.2 8.5 21.3 14.8 16.3 18.9C12.4 21.8 7.6 23.1 2.6 23L1.1 16.9L6.8 14.5L10.2 17.1C13.1 15.5 15.9 12.7 17.6 9.6L15.1 6.6Z" fill="#3d85e8" stroke="#3d85e8" stroke-width="0.6" stroke-linejoin="round"/></svg></div>
<div class="a txt" style="left:1137px;top:1065.28px">+177216</div>
<div class="red" style="left:1226px;top:1067.18px;width:95px;height:32px"></div>
<div class="a" style="left:1462px;top:1071.78px"><svg width="24" height="18" viewBox="0 0 24 18"><path d="M0 2.2A2.200 2.200 0 0 1 2.200 0h19.600A2.200 2.200 0 0 1 24 2.200v.6L12 10 0 2.800z" fill="#3b80e8"/><path d="M0 5.200l12 7.300 12-7.300v10.600A2.200 2.200 0 0 1 21.800 18H2.200A2.200 2.200 0 0 1 0 15.800z" fill="#3b80e8"/></svg></div>
<div class="a txt" style="left:1496px;top:1065.28px;width:40px;overflow:hidden">r</div>
<div class="a txt" style="right:1298.2px;top:1065.28px">gmail.com</div>
<div class="red" style="left:1500px;top:1067.18px;width:147px;height:32px"></div>
<div class="a dt" style="left:2055px;top:1053.78px">Oct 13 2025</div>
<div class="a tm" style="left:2055px;top:1080.78px">06:25 PM <small>(CST)</small></div>
<div class="tag" style="left:2636px;top:1054.28px">lead</div>
<div class="dot" style="left:418px;top:1153.22px"></div>
<div class="dot" style="left:418px;top:1162.92px"></div>
<div class="dot" style="left:418px;top:1172.62px"></div>
<div class="cb" style="left:450px;top:1150.72px"></div>
<div class="av" style="left:552px;top:1131.72px;background:#80b8a2">FV</div>
<div class="a txt" style="left:639px;top:1151.02px">Fabiana</div>
<div class="red" style="left:722px;top:1148.22px;width:124px;height:36px"></div>
<div class="a" style="left:1100px;top:1155.72px"><svg width="25" height="24" viewBox="0 0 25 24"><path d="M17.6 1.1L23.9 2.3C24.2 8.5 21.3 14.8 16.3 18.9C12.4 21.8 7.6 23.1 2.6 23L1.1 16.9L6.8 14.5L10.2 17.1C13.1 15.5 15.9 12.7 17.6 9.6L15.1 6.6Z" fill="#3d85e8" stroke="#3d85e8" stroke-width="0.6" stroke-linejoin="round"/></svg></div>
<div class="a txt" style="left:1137px;top:1151.72px">+189895</div>
<div class="red" style="left:1226px;top:1150.02px;width:95px;height:32px"></div>
<div class="a" style="left:1462px;top:1158.22px"><svg width="24" height="18" viewBox="0 0 24 18"><path d="M0 2.2A2.200 2.200 0 0 1 2.200 0h19.600A2.200 2.200 0 0 1 24 2.200v.6L12 10 0 2.800z" fill="#3b80e8"/><path d="M0 5.200l12 7.300 12-7.300v10.600A2.200 2.200 0 0 1 21.800 18H2.200A2.200 2.200 0 0 1 0 15.800z" fill="#3b80e8"/></svg></div>
<div class="a txt" style="left:1496px;top:1151.72px;width:40px;overflow:hidden">v</div>
<div class="a txt" style="right:1296.6px;top:1151.72px">gmail.com</div>
<div class="red" style="left:1500px;top:1150.02px;width:147px;height:32px"></div>
<div class="a dt" style="left:2055px;top:1140.22px">Oct 13 2025</div>
<div class="a tm" style="left:2055px;top:1167.22px">06:16 PM <small>(CST)</small></div>
<div class="tag" style="left:2636px;top:1140.72px">lead</div>
<div class="dot" style="left:418px;top:1239.66px"></div>
<div class="dot" style="left:418px;top:1249.36px"></div>
<div class="dot" style="left:418px;top:1259.06px"></div>
<div class="cb" style="left:450px;top:1237.16px"></div>
<div class="av" style="left:552px;top:1218.16px;background:#b5887a">AG</div>
<div class="a txt" style="left:639px;top:1237.46px">Andres</div>
<div class="red" style="left:715px;top:1237.66px;width:124px;height:36px"></div>
<div class="a" style="left:1100px;top:1242.16px"><svg width="25" height="24" viewBox="0 0 25 24"><path d="M17.6 1.1L23.9 2.3C24.2 8.5 21.3 14.8 16.3 18.9C12.4 21.8 7.6 23.1 2.6 23L1.1 16.9L6.8 14.5L10.2 17.1C13.1 15.5 15.9 12.7 17.6 9.6L15.1 6.6Z" fill="#3d85e8" stroke="#3d85e8" stroke-width="0.6" stroke-linejoin="round"/></svg></div>
<div class="a txt" style="left:1137px;top:1238.16px">+61 405 5</div>
<div class="red" style="left:1226px;top:1242.06px;width:95px;height:32px"></div>
<div class="a" style="left:1462px;top:1244.66px"><svg width="24" height="18" viewBox="0 0 24 18"><path d="M0 2.2A2.200 2.200 0 0 1 2.200 0h19.600A2.200 2.200 0 0 1 24 2.200v.6L12 10 0 2.800z" fill="#3b80e8"/><path d="M0 5.200l12 7.300 12-7.300v10.600A2.200 2.200 0 0 1 21.800 18H2.200A2.200 2.200 0 0 1 0 15.800z" fill="#3b80e8"/></svg></div>
<div class="a txt" style="left:1496px;top:1238.16px;width:40px;overflow:hidden">a</div>
<div class="a txt" style="right:1314.3px;top:1238.16px">mail.com</div>
<div class="red" style="left:1500px;top:1242.06px;width:147px;height:32px"></div>
<div class="a dt" style="left:2055px;top:1226.66px">Oct 13 2025</div>
<div class="a tm" style="left:2055px;top:1253.66px">05:09 PM <small>(CST)</small></div>
<div class="a" style="left:2289px;top:1240.16px"><svg width="21" height="21" viewBox="0 0 21 21"><path d="M3.6 14.6A8.9 8.9 0 1 1 6.6 17.7L1 19.6Z" fill="none" stroke="#5dcf7a" stroke-width="1.8" stroke-linejoin="round"/><path d="M6.2 6.2C6.6 5.5 7.5 5.6 7.8 6.3L8.5 8.3C8.6 8.8 8.3 9.2 8 9.5C8.9 11.1 10.1 12.3 11.7 13.1C12 12.8 12.5 12.5 13 12.7L14.7 13.5C15.3 13.9 15.2 14.7 14.6 15.1C13.6 15.800 12.2 15.800 11 15.2C8.800 14.100 7 12.300 6 10.100C5.500 8.900 5.600 7.200 6.200 6.200Z" fill="#5dcf7a"/></svg></div>
<div class="a txt" style="left:2323px;top:1238.66px">15 hours ago</div>
<div class="tag" style="left:2636px;top:1227.16px">lead</div>
<div class="dot" style="left:418px;top:1326.1px"></div>
<div class="dot" style="left:418px;top:1335.8px"></div>
<div class="dot" style="left:418px;top:1345.5px"></div>
<div class="cb" style="left:450px;top:1323.6px"></div>
<div class="av" style="left:552px;top:1304.6px;background:#b0bb80">GL</div>
<div class="a txt" style="left:639px;top:1323.9px">Gerson La</div>
<div class="red" style="left:739px;top:1321.1px;width:124px;height:36px"></div>
<div class="a" style="left:1462px;top:1331.1px"><svg width="24" height="18" viewBox="0 0 24 18"><path d="M0 2.2A2.200 2.200 0 0 1 2.200 0h19.600A2.200 2.200 0 0 1 24 2.200v.6L12 10 0 2.800z" fill="#3b80e8"/><path d="M0 5.200l12 7.300 12-7.300v10.600A2.200 2.200 0 0 1 21.800 18H2.200A2.200 2.200 0 0 1 0 15.800z" fill="#3b80e8"/></svg></div>
<div class="a txt" style="left:1496px;top:1324.6px;width:40px;overflow:hidden">g</div>
<div class="a txt" style="right:1210px;top:1324.6px">rde.06@gmail.com</div>
<div class="red" style="left:1500px;top:1326.1px;width:147px;height:32px"></div>
<div class="a dt" style="left:2055px;top:1313.1px">Oct 13 2025</div>
<div class="a tm" style="left:2055px;top:1340.1px">04:55 PM <small>(CST)</small></div>
<div class="tag" style="left:2636px;top:1313.6px">mb affiliate</div>
<div class="dot" style="left:418px;top:1412.54px"></div>
<div class="dot" style="left:418px;top:1422.24px"></div>
<div class="dot" style="left:418px;top:1431.94px"></div>
<div class="cb" style="left:450px;top:1410.04px"></div>
<div class="av" style="left:552px;top:1391.04px;background:#86ba88">GP</div>
<div class="a txt" style="left:639px;top:1410.34px">Gonzalo Seba</div>
<div class="red" style="left:769px;top:1410.54px;width:134px;height:36px"></div>
<div class="a txt" style="left:908px;top:1410.54px"><span style="font-size:16px">...</span></div>
<div class="a" style="left:1100px;top:1415.04px"><svg width="25" height="24" viewBox="0 0 25 24"><path d="M17.6 1.1L23.9 2.3C24.2 8.5 21.3 14.8 16.3 18.9C12.4 21.8 7.6 23.1 2.6 23L1.1 16.9L6.8 14.5L10.2 17.1C13.1 15.5 15.9 12.7 17.6 9.6L15.1 6.6Z" fill="#3d85e8" stroke="#3d85e8" stroke-width="0.6" stroke-linejoin="round"/></svg></div>
<div class="a txt" style="left:1137px;top:1411.04px">+56 9 722</div>
<div class="red" style="left:1226px;top:1414.84px;width:95px;height:32px"></div>
<div class="a" style="left:1462px;top:1417.54px"><svg width="24" height="18" viewBox="0 0 24 18"><path d="M0 2.2A2.200 2.200 0 0 1 2.200 0h19.600A2.200 2.200 0 0 1 24 2.200v.6L12 10 0 2.800z" fill="#3b80e8"/><path d="M0 5.200l12 7.300 12-7.300v10.600A2.200 2.200 0 0 1 21.800 18H2.200A2.200 2.200 0 0 1 0 15.800z" fill="#3b80e8"/></svg></div>
<div class="a txt" style="left:1496px;top:1411.04px;width:40px;overflow:hidden">g</div>
<div class="a txt" style="right:1321.2px;top:1411.04px">mail.com</div>
<div class="red" style="left:1500px;top:1414.84px;width:147px;height:32px"></div>
<div class="a dt" style="left:2055px;top:1399.54px">Oct 13 2025</div>
<div class="a tm" style="left:2055px;top:1426.54px">04:29 PM <small>(CST)</small></div>
<div class="tag" style="left:2636px;top:1400.04px">lead</div>
<div class="tag" style="left:2707px;top:1400.04px">aplico - no calificado</div>
<div class="dot" style="left:418px;top:1498.98px"></div>
<div class="dot" style="left:418px;top:1508.68px"></div>
<div class="dot" style="left:418px;top:1518.38px"></div>
<div class="cb" style="left:450px;top:1496.48px"></div>
<div class="av" style="left:552px;top:1477.48px;background:#b37a9e">S</div>
<div class="a txt" style="left:639px;top:1496.78px">Steven</div>
<div class="a" style="left:1100px;top:1501.48px"><svg width="25" height="24" viewBox="0 0 25 24"><path d="M17.6 1.1L23.9 2.3C24.2 8.5 21.3 14.8 16.3 18.9C12.4 21.8 7.6 23.1 2.6 23L1.1 16.9L6.8 14.5L10.2 17.1C13.1 15.5 15.9 12.7 17.6 9.6L15.1 6.6Z" fill="#3d85e8" stroke="#3d85e8" stroke-width="0.6" stroke-linejoin="round"/></svg></div>
<div class="a txt" style="left:1137px;top:1497.48px">+506 7155</div>
<div class="red" style="left:1226px;top:1495.98px;width:95px;height:32px"></div>
<div class="a" style="left:1462px;top:1503.98px"><svg width="24" height="18" viewBox="0 0 24 18"><path d="M0 2.2A2.200 2.200 0 0 1 2.200 0h19.600A2.200 2.200 0 0 1 24 2.200v.6L12 10 0 2.800z" fill="#3b80e8"/><path d="M0 5.200l12 7.300 12-7.300v10.600A2.200 2.200 0 0 1 21.800 18H2.200A2.200 2.200 0 0 1 0 15.800z" fill="#3b80e8"/></svg></div>
<div class="a txt" style="left:1496px;top:1497.48px;width:40px;overflow:hidden">c</div>
<div class="a txt" style="right:1245.8px;top:1497.48px">998@gmail.com</div>
<div class="red" style="left:1500px;top:1495.98px;width:147px;height:32px"></div>
<div class="a dt" style="left:2055px;top:1485.98px">Oct 13 2025</div>
<div class="a tm" style="left:2055px;top:1512.98px">03:45 PM <small>(CST)</small></div>
<div class="a" style="left:2289px;top:1499.48px"><svg width="21" height="21" viewBox="0 0 21 21"><path d="M3.6 14.6A8.9 8.9 0 1 1 6.6 17.7L1 19.6Z" fill="none" stroke="#5dcf7a" stroke-width="1.8" stroke-linejoin="round"/><path d="M6.2 6.2C6.6 5.5 7.5 5.6 7.8 6.3L8.5 8.3C8.6 8.8 8.3 9.2 8 9.5C8.9 11.1 10.1 12.3 11.7 13.1C12 12.8 12.5 12.5 13 12.7L14.7 13.5C15.3 13.9 15.2 14.7 14.6 15.1C13.6 15.800 12.2 15.800 11 15.2C8.800 14.100 7 12.300 6 10.100C5.500 8.900 5.600 7.200 6.200 6.200Z" fill="#5dcf7a"/></svg></div>
<div class="a txt" style="left:2323px;top:1497.98px">16 hours ago</div>
<div class="tag" style="left:2636px;top:1486.48px">lead</div>
<div class="dot" style="left:418px;top:1585.42px"></div>
<div class="dot" style="left:418px;top:1595.12px"></div>
<div class="dot" style="left:418px;top:1604.82px"></div>
<div class="cb" style="left:450px;top:1582.92px"></div>
<div class="av" style="left:552px;top:1563.92px;background:#b08a74">CS</div>
<div class="a txt" style="left:639px;top:1583.22px">Catalina A</div>
<div class="red" style="left:734px;top:1572.62px;width:129px;height:36px"></div>
<div class="a" style="left:1100px;top:1587.92px"><svg width="25" height="24" viewBox="0 0 25 24"><path d="M17.6 1.1L23.9 2.3C24.2 8.5 21.3 14.8 16.3 18.9C12.4 21.8 7.6 23.1 2.6 23L1.1 16.9L6.8 14.5L10.2 17.1C13.1 15.5 15.9 12.7 17.6 9.6L15.1 6.6Z" fill="#3d85e8" stroke="#3d85e8" stroke-width="0.6" stroke-linejoin="round"/></svg></div>
<div class="a txt" style="left:1137px;top:1583.92px">+506 8962</div>
<div class="red" style="left:1226px;top:1572.42px;width:95px;height:32px"></div>
<div class="a" style="left:1462px;top:1590.42px"><svg width="24" height="18" viewBox="0 0 24 18"><path d="M0 2.2A2.200 2.200 0 0 1 2.200 0h19.600A2.200 2.200 0 0 1 24 2.200v.6L12 10 0 2.800z" fill="#3b80e8"/><path d="M0 5.200l12 7.300 12-7.300v10.600A2.200 2.200 0 0 1 21.800 18H2.200A2.200 2.200 0 0 1 0 15.800z" fill="#3b80e8"/></svg></div>
<div class="a txt" style="left:1496px;top:1583.92px;width:40px;overflow:hidden">c</div>
<div class="a txt" style="right:1321.2px;top:1583.92px">mail.com</div>
<div class="red" style="left:1500px;top:1572.42px;width:147px;height:32px"></div>
<div class="a dt" style="left:2055px;top:1572.42px">Oct 13 2025</div>
<div class="a" style="left:2289px;top:1585.92px"><svg width="21" height="21" viewBox="0 0 21 21"><path d="M3.6 14.6A8.9 8.9 0 1 1 6.6 17.7L1 19.6Z" fill="none" stroke="#5dcf7a" stroke-width="1.8" stroke-linejoin="round"/><path d="M6.2 6.2C6.6 5.5 7.5 5.6 7.8 6.3L8.5 8.3C8.6 8.8 8.3 9.2 8 9.5C8.9 11.1 10.1 12.3 11.7 13.1C12 12.8 12.5 12.5 13 12.7L14.7 13.5C15.3 13.9 15.2 14.7 14.6 15.1C13.6 15.800 12.2 15.800 11 15.2C8.800 14.100 7 12.300 6 10.100C5.500 8.900 5.600 7.200 6.200 6.200Z" fill="#5dcf7a"/></svg></div>
<div class="a txt" style="left:2323px;top:1584.42px">17 hours ago</div>
<div class="tag" style="left:2636px;top:1572.92px">lead</div>
<div class="a" style="left:357px;top:1556px;width:2677px;height:49px;z-index:3;background:linear-gradient(to bottom,rgba(0,0,0,0),rgba(0,0,0,0.09));-webkit-mask-image:linear-gradient(to right,#000 0,#000 2560px,transparent 2677px)"></div>
<div class="a" style="left:0;top:1605px;width:3044px;height:3px;background:#fff"></div>
<svg class="a" style="left:0;top:0" width="3044" height="1608" viewBox="0 0 3044 1608" fill="none" stroke="#d83a27" stroke-width="6.5" stroke-linecap="butt" stroke-linejoin="miter"><path d="M3060 498L2912 645"/><path d="M2920 610L2911 645L2948 637" stroke-linejoin="round"/><path d="M3060 1228L2918 1370"/><path d="M2908 1379L2921 1338L2927 1356L2932 1360L2949 1365z" fill="#d83a27" stroke-width="1"/></svg>
</body></html>
